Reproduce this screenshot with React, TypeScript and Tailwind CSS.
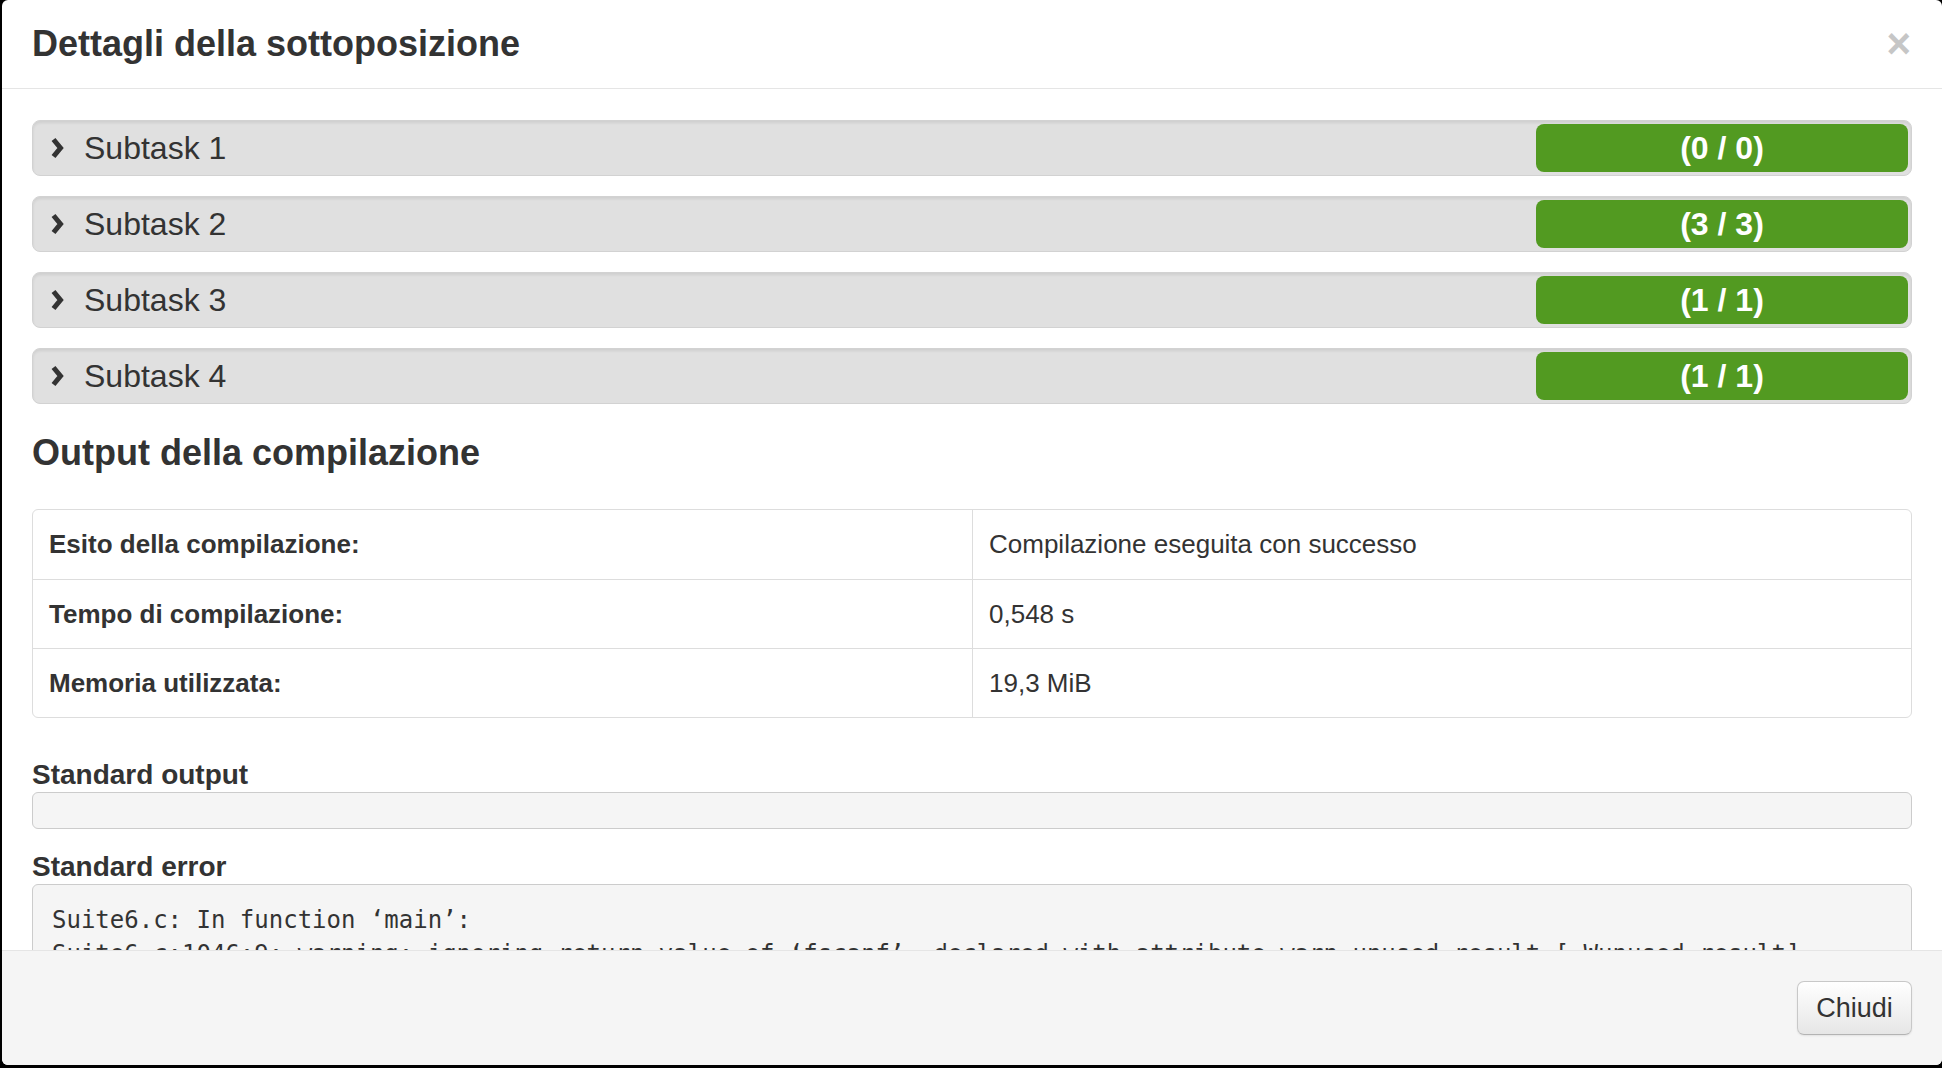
import React from "react";

const subtasks = [
  { name: "Subtask 1", score: "(0 / 0)" },
  { name: "Subtask 2", score: "(3 / 3)" },
  { name: "Subtask 3", score: "(1 / 1)" },
  { name: "Subtask 4", score: "(1 / 1)" },
];

const rows = [
  { label: "Esito della compilazione:", value: "Compilazione eseguita con successo" },
  { label: "Tempo di compilazione:", value: "0,548 s" },
  { label: "Memoria utilizzata:", value: "19,3 MiB" },
];

const stderr = `Suite6.c: In function ‘main’:
Suite6.c:1046:9: warning: ignoring return value of ‘fscanf’, declared with attribute warn_unused_result [-Wunused-result]
 1046 |         fscanf(in, "%d", &N);
      |         ^~~~~~~~~~~~~~~~~~~~`;

function Chevron() {
  return (
    <svg width="15" height="22" viewBox="0 0 15 22" className="shrink-0">
      <path
        d="M2.5 2.5 L9.5 11 L2.5 19.5"
        stroke="#333"
        strokeWidth="5"
        fill="none"
        strokeLinecap="butt"
        strokeLinejoin="miter"
        strokeMiterlimit="4"
      />
    </svg>
  );
}

export default function App() {
  return (
    <div className="w-[1942px] h-[1068px] bg-black overflow-hidden font-['Liberation_Sans',Arial,sans-serif] text-[#333]">
      <div className="ml-[2px] w-[1940px] h-[1065px] bg-white rounded-[6px] flex flex-col overflow-hidden">
        {/* Header */}
        <div className="h-[89px] shrink-0 border-b border-[#e5e5e5] pl-[30px] pr-[31px] flex items-center justify-between">
          <h4 className="text-[36px] font-bold leading-[40px]">Dettagli della sottoposizione</h4>
          <span className="text-[42px] font-bold leading-none text-[#c6c6c6]">×</span>
        </div>

        {/* Body */}
        <div className="flex-1 overflow-hidden px-[30px] pt-[31px]">
          <div className="flex flex-col gap-[20px]">
            {subtasks.map((s) => (
              <div
                key={s.name}
                className="h-[56px] flex items-center rounded-[8px] border border-[#d2d2d2] bg-[#e0e0e0] shadow-[inset_0_2px_3px_rgba(0,0,0,0.08)] pl-[18px] pr-[3px]"
              >
                <Chevron />
                <span className="ml-[18px] text-[32px] leading-none">{s.name}</span>
                <div className="flex-1" />
                <div className="w-[372px] h-[48px] rounded-[8px] bg-[#529a21] text-white text-[32px] font-bold flex items-center justify-center">
                  {s.score}
                </div>
              </div>
            ))}
          </div>

          <h3 className="mt-[29px] text-[36px] font-bold leading-[40px]">Output della compilazione</h3>

          <div className="mt-[36px] border border-[#ddd] rounded-[6px]">
            {rows.map((r, i) => (
              <div
                key={r.label}
                className={
                  i === 0
                    ? "grid grid-cols-2 h-[69px]"
                    : "grid grid-cols-2 h-[69px] border-t border-[#ddd]"
                }
              >
                <div className="px-[16px] flex items-center font-bold text-[26px]">{r.label}</div>
                <div className="px-[16px] flex items-center text-[26px] border-l border-[#ddd]">{r.value}</div>
              </div>
            ))}
          </div>

          <div className="mt-[41px] text-[28px] font-bold leading-[32px]">Standard output</div>
          <div className="mt-[1px] h-[37px] rounded-[6px] border border-[#ccc] bg-[#f5f5f5]" />

          <div className="mt-[22px] text-[28px] font-bold leading-[32px]">Standard error</div>
          <pre className="mt-[1px] rounded-[6px] border border-[#ccc] bg-[#f5f5f5] px-[19px] py-[18px] font-['DejaVu_Sans_Mono',monospace] text-[24px] leading-[34px] whitespace-pre text-[#333] overflow-hidden">
            {stderr}
          </pre>
        </div>

        {/* Footer */}
        <div className="h-[115px] shrink-0 border-t border-[#e5e5e5] bg-[#f5f5f5] flex items-center justify-end pr-[30px]">
          <button className="w-[115px] h-[54px] rounded-[7px] border border-[#c8c8c8] border-b-[#b3b3b3] bg-linear-to-b from-white to-[#e6e6e6] shadow-[0_1px_2px_rgba(0,0,0,0.08)] text-[27px] text-[#333]">
            Chiudi
          </button>
        </div>
      </div>
    </div>
  );
}
